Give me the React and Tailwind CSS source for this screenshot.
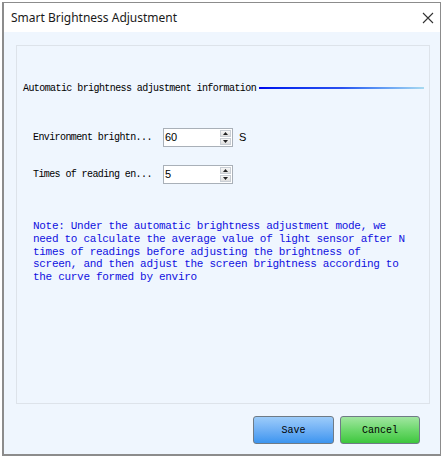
import React from "react";

const mono = { fontFamily: '"Liberation Mono", "DejaVu Sans Mono", monospace' };

function SpinBox({ value }) {
  return (
    <div className="flex h-[19px] w-[70px] border border-[#a9b0b8] bg-white">
      <div
        className="flex-1 pl-[1px] text-[11px] leading-[17px] text-black"
        style={{ fontFamily: '"Liberation Sans", Arial, sans-serif' }}
      >
        {value}
      </div>
      <div className="flex w-[13px] flex-col gap-[1px] p-[1px]">
        <div className="flex flex-1 items-center justify-center border border-[#c9ced4] bg-gradient-to-b from-[#f7f7f7] to-[#dedede]">
          <svg width="5" height="3" viewBox="0 0 5 3">
            <path d="M2.5 0 L5 3 L0 3 Z" fill="#222" />
          </svg>
        </div>
        <div className="flex flex-1 items-center justify-center border border-[#c9ced4] bg-gradient-to-b from-[#f7f7f7] to-[#dedede]">
          <svg width="5" height="3" viewBox="0 0 5 3">
            <path d="M0 0 L5 0 L2.5 3 Z" fill="#222" />
          </svg>
        </div>
      </div>
    </div>
  );
}

function FieldRow({ label, value, unit }) {
  return (
    <div className="flex h-[19px] items-center">
      <div
        className="w-[146px] shrink-0 whitespace-nowrap pl-[16px] text-[10px] tracking-[-0.6px] text-black"
        style={mono}
      >
        {label}
      </div>
      <SpinBox value={value} />
      {unit && (
        <span
          className="ml-[6px] text-[11px] text-black"
          style={{ fontFamily: '"Liberation Sans", Arial, sans-serif' }}
        >
          {unit}
        </span>
      )}
    </div>
  );
}

export default function App() {
  return (
    <div className="h-[463px] w-[446px] bg-white pl-[2px] pt-[2px]">
      <div className="flex h-[454px] w-[439px] flex-col border border-l-2 border-b-2 border-[#8c8c8c]">
        {/* Title bar */}
        <div className="flex h-[29px] items-center justify-between bg-white pl-[7px] pr-[6px]">
          <span
            className="text-[12px] text-[#1a1a1a]"
            style={{ fontFamily: '"Noto Sans", "Open Sans", sans-serif' }}
          >
            Smart Brightness Adjustment
          </span>
          <svg width="12" height="12" viewBox="0 0 12 12">
            <path d="M1 1 L11 11 M11 1 L1 11" stroke="#333" strokeWidth="1.1" />
          </svg>
        </div>

        {/* Body */}
        <div className="flex flex-1 flex-col bg-[#eff6fe] pl-[12px] pr-[10px] pt-[13px]">
          <div className="flex h-[359px] flex-col border border-[#dde3ea]">
            <div className="mt-[35px] flex h-[14px] items-center pl-[6px] pr-[5px]">
              <span className="whitespace-nowrap text-[10px] tracking-[-0.58px] text-black" style={mono}>
                Automatic brightness adjustment information
              </span>
              <div className="ml-[3px] h-[2px] flex-1 bg-gradient-to-r from-[#0000ee] via-[#2a4ff0] to-[#a8daf0]" />
            </div>

            <div className="mt-[33px] flex flex-col gap-[18px]">
              <FieldRow label="Environment brightn..." value="60" unit="S" />
              <FieldRow label="Times of reading en..." value="5" />
            </div>

            <p
              className="mt-[36px] whitespace-nowrap pl-[16px] text-[11px] leading-[12.8px] tracking-[-0.3px] text-[#1010e0]"
              style={mono}
            >
              Note: Under the automatic brightness adjustment mode, we
              <br />
              need to calculate the average value of light sensor after N
              <br />
              times of readings before adjusting the brightness of
              <br />
              screen, and then adjust the screen brightness according to
              <br />
              the curve formed by enviro
            </p>
          </div>

          {/* Footer buttons */}
          <div className="mt-[12px] flex justify-end gap-[6px] pr-[10px]">
            <button
              className="h-[28px] w-[81px] rounded-[3px] border border-[#6f7b86] bg-gradient-to-b from-[#9cccfa] via-[#6fb0f5] to-[#3b95ef] text-[10px] text-black"
              style={mono}
            >
              Save
            </button>
            <button
              className="h-[28px] w-[80px] rounded-[3px] border border-[#6f7b86] bg-gradient-to-b from-[#a0e6a0] via-[#6cd86c] to-[#3cc73c] text-[10px] text-black"
              style={mono}
            >
              Cancel
            </button>
          </div>
        </div>
      </div>
    </div>
  );
}
